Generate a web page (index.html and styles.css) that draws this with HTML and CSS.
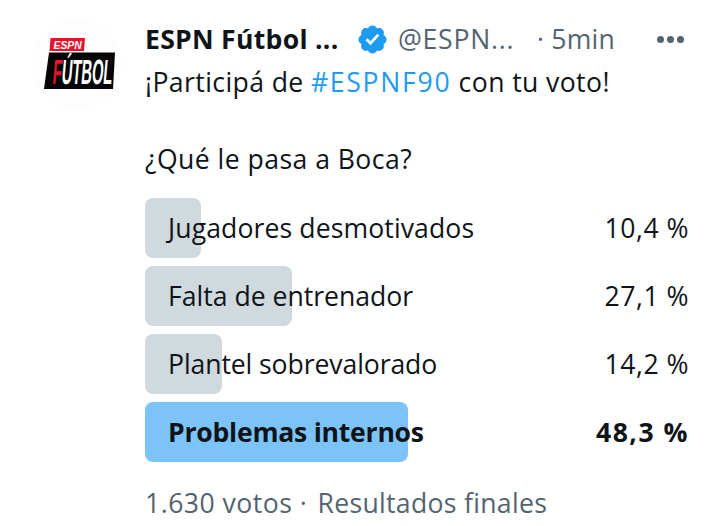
FILE: index.html
```html
<!DOCTYPE html>
<html lang="es">
<head>
<meta charset="utf-8">
<title>ESPN Fútbol</title>
<link rel="stylesheet" href="styles.css">
</head>
<body>
<article class="tweet">
  <div class="avatar">
    <svg class="logo" viewBox="32 20 92 92" aria-label="ESPN Fútbol">
      <circle cx="77" cy="64" r="45" fill="#fdfdfd"/>
      <polygon points="50.500,38 85,38 84,51 49.500,51" fill="#e8132b"/>
      <text class="logo-espn" transform="translate(53.500 48.500) scale(.94 1)">ESPN</text>
      <polygon points="49,52.500 115,52.500 113,89 44,89" fill="#050505"/>
      <text class="logo-futbol" transform="translate(52 83.500) skewX(-5) scale(.42 1)"><tspan fill="#e8132b">F</tspan>ÚTBOL</text>
    </svg>
  </div>
  <div class="main">
    <header class="head">
      <span class="name">ESPN Fútbol ...</span>
      <svg class="badge" viewBox="0 0 24 24" aria-label="Verificada"><path fill="#1d9bf0" d="M22.25 12c0-1.43-.88-2.67-2.19-3.34.46-1.39.2-2.9-.81-3.91s-2.52-1.27-3.91-.81c-.66-1.31-1.91-2.19-3.34-2.19s-2.67.88-3.33 2.19c-1.4-.46-2.91-.2-3.92.81s-1.26 2.52-.8 3.91c-1.31.67-2.2 1.91-2.2 3.34s.89 2.67 2.2 3.34c-.46 1.39-.21 2.9.8 3.91s2.52 1.26 3.91.81c.67 1.31 1.91 2.19 3.34 2.19s2.68-.88 3.34-2.19c1.39.45 2.9.2 3.91-.81s1.27-2.52.81-3.91c1.31-.67 2.19-1.91 2.19-3.34z"/><path fill="#fff" d="M10.54 16.2l-3.64-3.64 1.41-1.41 2.14 2.14 5.08-5.53 1.47 1.35z"/></svg>
      <span class="handle">@ESPN...</span>
      <span class="time">· 5min</span>
      <span class="more"><i></i><i></i><i></i></span>
    </header>
    <p class="text">¡Participá de <a class="tag">#ESPNF90</a> con tu voto!</p>
    <p class="question">¿Qué le pasa a Boca?</p>
    <ul class="poll">
      <li class="option"><span class="bar" style="width:56px"></span><span class="label wide">Jugadores desmotivados</span><span class="pct">10,4 %</span></li>
      <li class="option"><span class="bar" style="width:147px"></span><span class="label">Falta de entrenador</span><span class="pct">27,1 %</span></li>
      <li class="option"><span class="bar" style="width:77px"></span><span class="label narrow">Plantel sobrevalorado</span><span class="pct">14,2 %</span></li>
      <li class="option win"><span class="bar" style="width:263px"></span><span class="label">Problemas internos</span><span class="pct">48,3 %</span></li>
    </ul>
    <p class="foot">1.630 votos · <span class="status">Resultados finales</span></p>
  </div>
</article>
</body>
</html>
```

FILE: styles.css
```css
* { box-sizing: border-box; }
html, body { margin: 0; padding: 0; background: #fff; }
body {
  width: 719px;
  height: 526px;
  overflow: hidden;
  font-family: "Open Sans", "Noto Sans", sans-serif;
  font-size: 26.6px;
  color: #0f1419;
}
.tweet { display: flex; height: 526px; padding: 20px 30px 0 32px; }
.avatar { width: 113px; flex: none; }
.logo { display: block; width: 92px; height: 92px; }
.logo-espn { font: italic 700 11px "Liberation Sans", sans-serif; fill: #fff; }
.logo-futbol { font: 700 35px "Liberation Sans", sans-serif; fill: #fff; }
.main { flex: 1; min-width: 0; display: flex; flex-direction: column; padding-top: 2px; }
.head { display: flex; align-items: center; height: 34px; line-height: 34px; white-space: nowrap; }
.name { font-weight: 700; width: 211px; flex: none; letter-spacing: 0.27px; }
.badge { width: 33px; height: 33px; flex: none; margin-right: 9px; }
.handle { color: #536471; width: 139px; flex: none; letter-spacing: 0.75px; }
.time { color: #536471; width: 120px; flex: none; letter-spacing: 0.2px; }
.more { display: flex; gap: 3px; }
.more i { width: 7px; height: 7px; border-radius: 50%; background: #536471; display: block; }
.text { margin: 9px 0 0; line-height: 34px; letter-spacing: 0.4px; }
.tag { color: #1d9bf0; letter-spacing: 1.7px; }
.question { margin: 43px 0 0; line-height: 34px; letter-spacing: 0.45px; }
.poll { list-style: none; margin: 22px 0 0; padding: 0; display: flex; flex-direction: column; gap: 8px; }
.option { position: relative; display: flex; justify-content: space-between; align-items: center; height: 60px; padding-left: 23px; }
.bar { position: absolute; left: 0; top: 0; bottom: 0; background: #cfd9de; border-radius: 8px; }
.label, .pct { position: relative; }
.wide { letter-spacing: 0.1px; }
.narrow { letter-spacing: -0.1px; }
.pct { letter-spacing: 0.5px; }
.win .bar { background: #7cc4f8; }
.win .label { font-weight: 700; letter-spacing: -0.25px; }
.win .pct { font-weight: 700; letter-spacing: 1.5px; }
.foot { margin: 24px 0 0; color: #536471; line-height: 34px; letter-spacing: 0.47px; }
.status { margin-left: 3px; letter-spacing: 0.3px; }
```
